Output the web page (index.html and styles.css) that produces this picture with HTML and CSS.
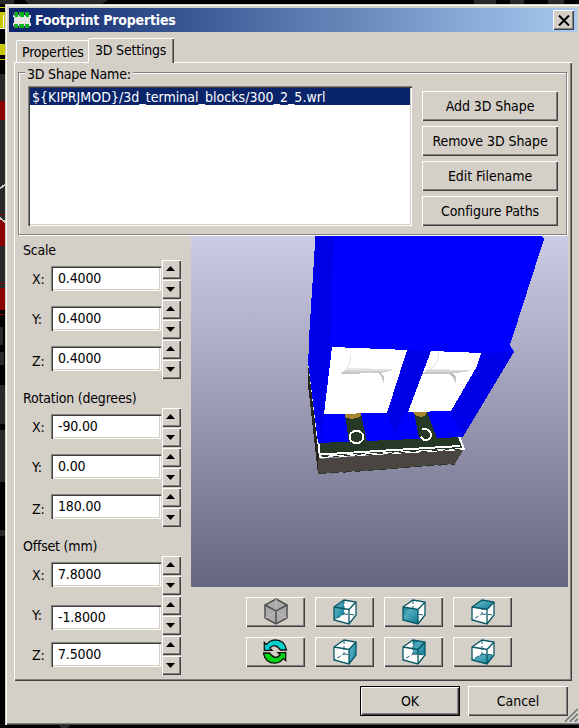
FILE: index.html
```html
<!DOCTYPE html>
<html lang="en">
<head>
<meta charset="utf-8">
<title>Footprint Properties</title>
<link rel="stylesheet" href="styles.css">
</head>
<body>
<svg class="board" width="579" height="728" viewBox="0 0 579 728" shape-rendering="crispEdges" aria-hidden="true">
  <rect width="579" height="728" fill="#000"/>
  <path d="M0 0H14V4H0zM24 0h84l-6 4H28zM474 0h22v4h-22zM510 0h14v4h-14zM548 0h16v4h-16z" fill="#292929"/>
  <path d="M0 7.500H5M0 59.500H5" stroke="#c8c800"/>
  <path d="M0 12H5V28H0zM0 44H5V55H0z" fill="#c8c800"/>
  <path d="M3 15V27M0 28.500H5" stroke="#fff"/>
  <path d="M0 74H5V310H0z" fill="#292929"/>
  <path d="M0 101H5V120H0zM0 220H5V246H0zM0 288H5V310H0z" fill="#8b0000"/>
  <path d="M0 214.500H5M0 283.500H5M0 314.500H5" stroke="#8b0000"/>
  <path d="M5 185L0 188M0 218L5 222" stroke="#c8c8c8" stroke-width="2" fill="none"/>
  <path d="M0 327H3V345H0zM0 352H4V365H0zM0 385H5V424H0zM0 430H5V482H0zM0 530H5V536H0zM58 725h12l-3 3h-6z" fill="#292929"/>
</svg>
<main class="dialog">
  <header class="titlebar">
    <svg class="chip" width="18" height="18" viewBox="0 0 18 18" shape-rendering="crispEdges"><path d="M0 4H18V7H17V12H18V15H0V12H1V7z" fill="#e4e4e4"/><path d="M1 1h1v4H1zM6 1h1v4H6zM12 1h1v4h-1zM1 13h1v4H1zM6 13h1v4H6zM12 13h1v4h-1z" fill="#757565"/><path d="M2 1h3v5H2zM7 1h4v5H7zM13 1h3v5h-3zM2 13h3v4H2zM7 13h4v4H7zM13 13h3v4h-3z" fill="#00b918"/></svg>
    <h1>Footprint Properties</h1>
    <button class="close" aria-label="Close"><svg width="12" height="11" viewBox="0 0 12 11"><path d="M1 0.5L11 10.5M11 .5L1 10.5" stroke="#000" stroke-width="2"/></svg></button>
  </header>
  <nav class="tabs"><div class="tab">Properties</div><div class="tab active">3D Settings</div></nav>
  <section class="panel">
    <fieldset class="shapes">
      <legend>3D Shape Name:</legend>
      <div class="list"><div class="item">${KIPRJMOD}/3d_terminal_blocks/300_2_5.wrl</div></div>
      <div class="actions"><button>Add 3D Shape</button><button>Remove 3D Shape</button><button>Edit Filename</button><button>Configure Paths</button></div>
    </fieldset>
    <div class="lower">
      <div class="values">
        <section><h2>Scale</h2>
          <div class="row"><label>X:</label><input value="0.4000"><span class="spin"><i></i><i class="down"></i></span></div>
          <div class="row"><label>Y:</label><input value="0.4000"><span class="spin"><i></i><i class="down"></i></span></div>
          <div class="row last"><label>Z:</label><input value="0.4000"><span class="spin"><i></i><i class="down"></i></span></div>
        </section>
        <section><h2>Rotation (degrees)</h2>
          <div class="row"><label>X:</label><input value="-90.00"><span class="spin"><i></i><i class="down"></i></span></div>
          <div class="row"><label>Y:</label><input value="0.00"><span class="spin"><i></i><i class="down"></i></span></div>
          <div class="row last"><label>Z:</label><input value="180.00"><span class="spin"><i></i><i class="down"></i></span></div>
        </section>
        <section><h2>Offset (mm)</h2>
          <div class="row"><label>X:</label><input value="7.8000"><span class="spin"><i></i><i class="down"></i></span></div>
          <div class="row shifted"><label>Y:</label><input value="-1.8000"><span class="spin"><i></i><i class="down"></i></span></div>
          <div class="row"><label>Z:</label><input value="7.5000"><span class="spin"><i></i><i class="down"></i></span></div>
        </section>
      </div>
      <div class="preview">
        <svg class="scene" width="377" height="351" viewBox="191 236 377 351" shape-rendering="crispEdges">
          <defs>
            <linearGradient id="sky" x2="0" y2="1"><stop stop-color="#ccccE5"/><stop offset="1" stop-color="#666680"/></linearGradient>
            <linearGradient id="rod" x2="0" y2="1"><stop stop-color="#f0f0f0"/><stop offset=".4" stop-color="#b9b9b9"/><stop offset="1" stop-color="#d8d8d8"/></linearGradient>
          </defs>
          <path d="M191 236H568V587H191z" fill="url(#sky)"/>
          <path d="M308 364L320 456 318 474 308 385z" fill="#28251f"/>
          <path d="M318 459L464 449 455 464 318 474z" fill="#4b4542"/>
          <path d="M319 442L459 437 464 449 321 456z" fill="#263826"/>
          <path d="M309 362L320 457 464 449 459 437" fill="none" stroke="#fff" stroke-width="2"/>
          <path d="M321 454.5L460 446" stroke="#fff" stroke-width="2"/>
          <path d="M322 457L463 449" stroke="#263826" stroke-dasharray="6 5"/>
          <path d="M319 474L455 464" stroke="#263826" stroke-dasharray="7 5"/>
          <path d="M315.500 236H541l3 3-34 106 4 7-51 85-145 6-10-81z" fill="#00f"/>
          <path d="M315.500 236H334L330 348 324 414 320 443 309 357V338z" fill="#0000e8"/>
          <path d="M316 275L311 330" stroke="#00f"/>
          <path d="M407 350L431 351 408 412 395 436 387 413z" fill="#0000e8"/>
          <path d="M480 353L514 352 463 437 451 412z" fill="#0000e8"/>
          <path d="M395 436L405 412 451 411 459 437z" fill="#00f"/>
          <path d="M345 414L361 414 367 442H349zM414 412L427 412 437 438H419z" fill="#263826"/>
          <path d="M345 413H361V416Q353 421 345 417zM413 412H427L425 416Q419 418 415 415z" fill="#a8862e"/>
          <path d="M332 347L407 350 387 413 324 414z" fill="#fff"/>
          <path d="M431 351L481 353 477 366 451 411 408 412z" fill="#fff"/>
          <path d="M346 368L393 369 390 371 380 373 384 377V384L381 375 378 373 341 374zM427 369L471 370 466 372 453 373 456 377V384L452 376 449 374 422 374z" fill="url(#rod)"/>
          <path d="M351 354Q350 365 346 369M439 352Q438 365 430 370" fill="none" stroke="#e5e5e5"/>
          <ellipse cx="356.500" cy="437" rx="7" ry="6" fill="#263826" stroke="#fff" stroke-width="2"/>
          <path d="M422 429q8-1 9 6q-1 6-7 5l-3-3" fill="#263826" stroke="#fff" stroke-width="2"/>
        </svg>
        <div class="views">
          <button aria-label="Isometric"><svg width="26" height="28" viewBox="0 0 26 28"><path d="M13 1L24 7V20L13 26 2 20V7z" fill="#aaa" stroke="#505050" stroke-width="1.500"/><path d="M2 20L13 14 24 20M13 1V14" fill="none" stroke="#bdbdbd"/><path d="M2 7L13 13 24 7M13 13V26" fill="none" stroke="#505050" stroke-width="1.500"/></svg></button>
          <button aria-label="Left"><svg width="24" height="27" viewBox="0 0 24 27"><use href="#body"/><path d="M1 8L11 1V15L1 21z" fill="url(#teal)"/><use href="#hidden"/><use href="#edges"/></svg></button>
          <button aria-label="Front"><svg width="24" height="27" viewBox="0 0 24 27"><use href="#body"/><use href="#hidden"/><path d="M1 8L16 10.500V25L1 21z" fill="url(#teal)"/><use href="#edges"/></svg></button>
          <button aria-label="Top"><svg width="24" height="27" viewBox="0 0 24 27"><use href="#body"/><use href="#hidden"/><path d="M1 8L11 1 23 3 16 10.500z" fill="url(#teal)"/><use href="#edges"/></svg></button>
          <button aria-label="Refresh"><svg width="25" height="26" viewBox="0 0 25 26"><path d="M1.300 3.500V11.300H9L6.800 9Q12 3.500 17.500 11H23.500Q22 1 12 .8Q6.500 1.200 3.700 5.500z" fill="#00d2cf" stroke="#111" stroke-width="1.300"/><path d="M22.700 21.500V13.700H15L17.200 16Q12 21.500 6.500 14H.5Q2 24 12 24.200Q17.500 23.800 20.300 19.500z" fill="#00d214" stroke="#111" stroke-width="1.300"/></svg></button>
          <button aria-label="Right"><svg width="24" height="27" viewBox="0 0 24 27"><use href="#body"/><use href="#hidden"/><path d="M16 10.500L23 3V16L16 25z" fill="url(#teal)"/><use href="#edges"/></svg></button>
          <button aria-label="Back"><svg width="24" height="27" viewBox="0 0 24 27"><use href="#body"/><path d="M11 1L23 3V16L11 15z" fill="url(#teal)"/><use href="#hidden"/><use href="#edges"/></svg></button>
          <button aria-label="Bottom"><svg width="24" height="27" viewBox="0 0 24 27"><use href="#body"/><path d="M1 21L11 15 23 16 16 25z" fill="url(#teal)"/><use href="#hidden"/><use href="#edges"/></svg></button>
        </div>
      </div>
    </div>
  </section>
  <footer><button class="default">OK</button><button>Cancel</button></footer>
  <svg class="grip" width="15" height="15" viewBox="0 0 15 15"><path d="M0 15L15 0M5 15L15 5M10 15L15 10" stroke="#fff"/><path d="M1.500 15L15 1.500M6.500 15L15 6.500M11.500 15L15 11.500" stroke="#808080" stroke-width="2"/></svg>
</main>
<svg class="symbols" width="0" height="0" aria-hidden="true"><defs>
  <linearGradient id="teal" x2="1" y2="1"><stop stop-color="#0f7f96"/><stop offset=".35" stop-color="#52a9bd"/><stop offset="1" stop-color="#087b91"/></linearGradient>
  <path id="body" d="M1 8L11 1 23 3V16L16 25 1 21z" fill="#fff"/>
  <path id="hidden" d="M11 1V15L1 21M11 15L23 16" fill="none" stroke="#17606e" stroke-dasharray="4 2"/>
  <path id="edges" d="M1 8L11 1 23 3V16L16 25 1 21zL16 10.500 23 3M16 10.500V25" fill="none" stroke="#075664" stroke-width="1.300"/>
</defs></svg>
</body>
</html>
```
FILE: styles.css
```css
* { box-sizing: border-box; }
body { margin: 0; width: 579px; height: 728px; overflow: hidden; position: relative; background: #000; font: 14px/18px "DejaVu Sans Condensed", "DejaVu Sans", sans-serif; font-stretch: condensed; letter-spacing: -.2px; color: #000; }
.board { position: absolute; inset: 0; z-index: -1; }
.symbols { position: absolute; }
.dialog { position: relative; width: 576px; height: 721px; margin: 4px 0 0 5px; padding: 4px; background: #d4d0c8; box-shadow: inset 1px 1px #d4d0c8, inset 2px 2px #fff, inset 0 -1px #404040, inset 0 -2px #808080; overflow: hidden; }
.titlebar { display: flex; align-items: center; height: 24px; padding: 0 3px 0 4px; background: linear-gradient(90deg, #0a246a, #a6caf0); }
h1 { margin: 0 auto 0 4px; font-size: 14px; line-height: 20px; color: #fff; letter-spacing: -.2px; }
button { font: inherit; letter-spacing: -.07px; color: #000; margin: 0; padding: 0; border: 0; background: #d4d0c8; box-shadow: inset 1px 1px #fff, inset -1px -1px #404040, inset -2px -2px #808080; display: flex; align-items: center; justify-content: center; }
.close { width: 21px; height: 20px; }
.tabs { display: flex; align-items: flex-end; height: 30px; padding-left: 7px; }
.tab { height: 22px; width: 72px; padding: 2px 0 0 5px; border: solid #fff; border-width: 1px 0 0 1px; border-radius: 2px 0 0; white-space: nowrap; }
.tab.active { position: relative; height: 25px; width: 86px; margin-bottom: -1px; padding-left: 6px; background: #d4d0c8; box-shadow: inset -1px 0 #404040, inset -2px 0 #808080; }
.panel { width: 558px; height: 619px; margin-left: 5px; padding: 10px 4px 0; box-shadow: inset 1px 1px #fff, inset -1px -1px #404040, inset -2px -2px #808080; }
.shapes { position: relative; display: flex; justify-content: space-between; width: 549px; height: 163px; margin: 0; padding: 13px 8px 0 9px; border: 1px solid #808080; box-shadow: inset 1px 1px #fff, 1px 1px #fff; }
legend { position: absolute; left: 6px; top: -8px; padding: 0 2px; background: #d4d0c8; }
.list { width: 384px; height: 140px; padding: 2px; background: #fff; box-shadow: inset 1px 1px #808080, inset 2px 2px #404040, inset -1px -1px #fff, inset -2px -2px #d4d0c8; }
.item { height: 17px; line-height: 19px; padding-left: 2px; color: #fff; background: #0a246a; letter-spacing: .04px; }
.actions { display: grid; grid-auto-rows: 30px; gap: 5px; width: 136px; padding-top: 5px; }
.lower { display: flex; gap: 10px; height: 440px; margin-top: 1px; }
.values { width: 163px; padding-left: 5px; }
h2 { margin: 0; height: 28px; padding-top: 10px; font: inherit; white-space: nowrap; }
.values section:first-child h2 { height: 23px; padding-top: 5px; }
.row { display: flex; height: 40px; }
label { width: 28px; padding: 11px 0 0 9px; }
.last label { padding-top: 13px; }
input { width: 110px; height: 25px; margin-top: 7px; padding: 0 7px 2px; border: 0; outline: 0; font: inherit; letter-spacing: -.15px; background: #fff; box-shadow: inset 1px 1px #808080, inset 2px 2px #404040, inset -1px -1px #fff, inset -2px -2px #d4d0c8; }
.shifted input { margin-top: 10px; }
.spin { width: 20px; height: 40px; }
.spin i { display: block; height: 20px; padding: 7px 0 0 5px; box-shadow: inset 1px 1px #d4d0c8, inset 2px 2px #fff, inset -1px -1px #404040, inset -2px -2px #808080; }
.spin i::before { content: ""; display: block; width: 9px; height: 5px; background: #000; clip-path: polygon(50% 0, 100% 100%, 0 100%); }
.spin .down { padding-top: 8px; }
.spin .down::before { clip-path: polygon(0 0, 100% 0, 50% 100%); }
.preview { width: 377px; }
.scene { display: block; }
.views { display: grid; grid-template-columns: repeat(4, 59px); grid-auto-rows: 30px; gap: 10px; padding: 10px 0 0 55px; }
footer { display: flex; justify-content: flex-end; gap: 8px; padding: 5px 9px 0 0; }
footer button { width: 100px; height: 30px; }
.default { box-shadow: inset 0 0 0 1px #000, inset 2px 2px #fff, inset -2px -2px #404040, inset -3px -3px #808080; }
.grip { position: absolute; right: 3px; bottom: 3px; }
```
